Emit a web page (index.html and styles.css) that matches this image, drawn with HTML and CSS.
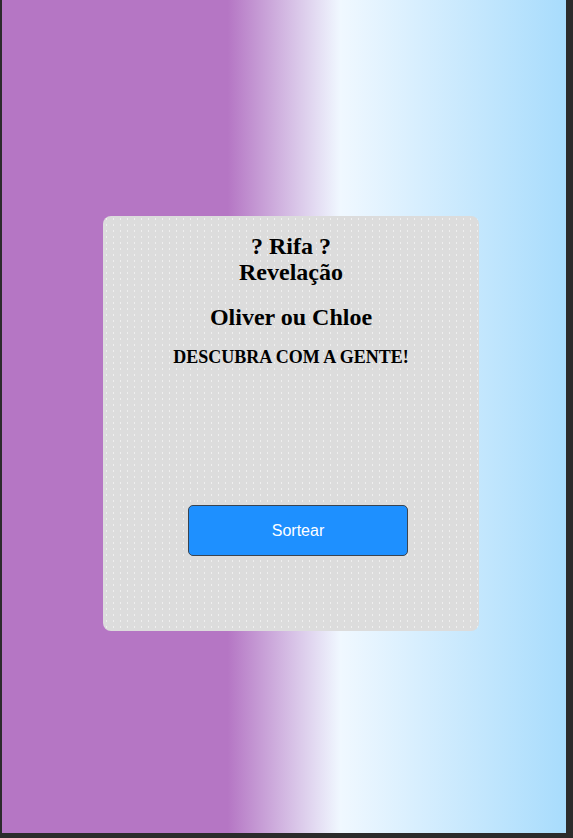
FILE: index.html
```html
<!DOCTYPE html>
<html lang="pt-BR">
<head>
<meta charset="utf-8">
<title>Rifa Revelação</title>
<link rel="stylesheet" href="styles.css">
</head>
<body>
<div class="page">
  <div class="card">
    <h2 class="title">? Rifa ?<br>Revelação</h2>
    <h2 class="names">Oliver ou Chloe</h2>
    <h3 class="subtitle">DESCUBRA COM A GENTE!</h3>
    <button class="btn" type="button">Sortear</button>
  </div>
</div>
</body>
</html>
```
FILE: styles.css
```css
html, body {
  margin: 0;
  padding: 0;
  background: #2b2b2b;
}
.page {
  width: 564px;
  height: 833px;
  margin-left: 2px;
  box-sizing: border-box;
  padding: 14px 0 0 14px;
  background: linear-gradient(to right, #b576c4 0%, #b576c4 40%, #f0f8ff 60%, #a8dcfc 100%);
  display: flex;
  align-items: center;
  justify-content: center;
  font-family: "Liberation Serif", "Times New Roman", serif;
}
.card {
  width: 376px;
  height: 415px;
  box-sizing: border-box;
  background-color: #dcdcdc;
  background-image: radial-gradient(circle, rgba(255,255,255,0.55) 0.6px, transparent 1px);
  background-size: 7px 6px;
  border-radius: 8px;
  padding: 17px 20px 0;
  display: flex;
  flex-direction: column;
  align-items: center;
  text-align: center;
  color: #000;
}
.title, .names {
  margin: 0;
  font-size: 24px;
  line-height: 26px;
  font-weight: bold;
}
.names {
  margin-top: 19px;
}
.subtitle {
  margin: 16px 0 0;
  font-size: 18px;
  line-height: 22px;
  font-weight: bold;
}
.btn {
  margin-top: 137px;
  margin-left: 14px;
  width: 220px;
  height: 51px;
  box-sizing: border-box;
  background: #1e90ff;
  border: 1px solid #3a4450;
  border-radius: 5px;
  color: #fff;
  font-family: "Liberation Sans", Arial, sans-serif;
  font-size: 16px;
  cursor: pointer;
}
```
